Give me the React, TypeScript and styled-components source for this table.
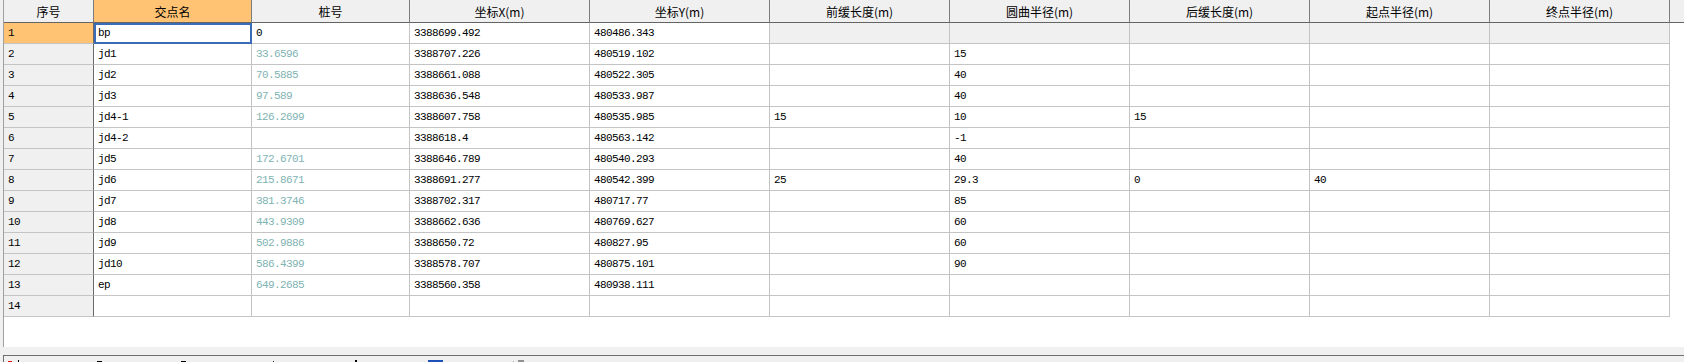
import styled, { createGlobalStyle } from "styled-components"

const GlobalStyle = createGlobalStyle`
  html, body {
    margin: 0;
    padding: 0;
    background: #f0f0f0;
    overflow: hidden;
  }
`

const Page = styled.div`
  width: 1684px;
  height: 362px;
  display: flex;
  flex-direction: column;
  overflow: hidden;
`

const GridPanel = styled.div`
  margin-left: 3px;
  height: 347px;
  flex: none;
  box-sizing: border-box;
  background: #ffffff;
  border-left: 1px solid #a0a0a0;
  display: flex;
  flex-direction: column;
`

const HeaderRow = styled.div`
  display: flex;
  height: 23px;
  flex: none;
`

const HeaderCell = styled.div<{ $w: number; $active?: boolean }>`
  width: ${(p) => p.$w}px;
  flex: none;
  box-sizing: border-box;
  border-right: 1px solid #7c7c7c;
  border-bottom: 1px solid #646464;
  background: ${(p) => (p.$active ? "#ffc373" : "#f0f0f0")};
  display: flex;
  align-items: center;
  justify-content: center;
  font-family: "Noto Sans CJK SC", "Noto Sans", sans-serif;
  font-size: 12px;
  color: #000;
`

const HeaderFiller = styled.div`
  flex: 1;
  border-bottom: 1px solid #646464;
  background: #f0f0f0;
`

const Row = styled.div`
  display: flex;
  height: 21px;
  flex: none;
`

const RowHead = styled.div<{ $active?: boolean }>`
  width: 90px;
  flex: none;
  box-sizing: border-box;
  padding-left: 4px;
  border-right: 1px solid #6a6a6a;
  border-bottom: 1px solid #c4c4c4;
  background: ${(p) => (p.$active ? "#ffc373" : "#f0f0f0")};
  display: flex;
  align-items: center;
  font-family: "Liberation Mono", monospace;
  font-size: 11px;
  letter-spacing: -0.6px;
  color: #000;
`

const Cell = styled.div<{ $w: number; $teal?: boolean; $off?: boolean; $sel?: boolean }>`
  width: ${(p) => p.$w}px;
  flex: none;
  box-sizing: border-box;
  padding-left: 4px;
  border-right: 1px solid #c4c4c4;
  border-bottom: 1px solid #c4c4c4;
  background: ${(p) => (p.$off ? "#f0f0f0" : "#ffffff")};
  color: ${(p) => (p.$teal ? "#80b3b3" : "#000000")};
  display: flex;
  align-items: center;
  white-space: pre;
  font-family: "Liberation Mono", monospace;
  font-size: 11px;
  letter-spacing: -0.6px;
  outline: ${(p) => (p.$sel ? "2px solid #3a6bb6" : "none")};
  outline-offset: -2px;
`

const Toolbar = styled.div`
  margin-top: 8px;
  margin-left: 3px;
  flex: 1;
  box-sizing: border-box;
  border-top: 1px solid #6e6e6e;
  border-left: 1px solid #6e6e6e;
  background: #f0f0f0;
  display: flex;
  padding: 4px 0 0 4px;
`

const ToolButton = styled.div<{ $w: number }>`
  width: ${(p) => p.$w}px;
  flex: none;
  height: 16px;
`

const widths = [158, 158, 180, 180, 180, 180, 180, 180, 180]
const headers = ["交点名", "桩号", "坐标X(m)", "坐标Y(m)", "前缓长度(m)", "圆曲半径(m)", "后缓长度(m)", "起点半径(m)", "终点半径(m)"]

const rows: string[][] = [
  ["bp", "0", "3388699.492", "480486.343", "", "", "", "", ""],
  ["jd1", "33.6596", "3388707.226", "480519.102", "", "15", "", "", ""],
  ["jd2", "70.5885", "3388661.088", "480522.305", "", "40", "", "", ""],
  ["jd3", "97.589", "3388636.548", "480533.987", "", "40", "", "", ""],
  ["jd4-1", "126.2699", "3388607.758", "480535.985", "15", "10", "15", "", ""],
  ["jd4-2", "", "3388618.4", "480563.142", "", "-1", "", "", ""],
  ["jd5", "172.6701", "3388646.789", "480540.293", "", "40", "", "", ""],
  ["jd6", "215.8671", "3388691.277", "480542.399", "25", "29.3", "0", "40", ""],
  ["jd7", "381.3746", "3388702.317", "480717.77", "", "85", "", "", ""],
  ["jd8", "443.9309", "3388662.636", "480769.627", "", "60", "", "", ""],
  ["jd9", "502.9886", "3388650.72", "480827.95", "", "60", "", "", ""],
  ["jd10", "586.4399", "3388578.707", "480875.101", "", "90", "", "", ""],
  ["ep", "649.2685", "3388560.358", "480938.111", "", "", "", "", ""],
  ["", "", "", "", "", "", "", "", ""],
]

export default function App() {
  return (
    <Page>
      <GlobalStyle />
      <GridPanel>
        <HeaderRow>
          <HeaderCell $w={90}>序号</HeaderCell>
          {headers.map((h, i) => (
            <HeaderCell key={h} $w={widths[i]} $active={i === 0}>
              {h}
            </HeaderCell>
          ))}
          <HeaderFiller />
        </HeaderRow>
        {rows.map((r, ri) => (
          <Row key={ri}>
            <RowHead $active={ri === 0}>{ri + 1}</RowHead>
            {r.map((v, ci) => (
              <Cell
                key={ci}
                $w={widths[ci]}
                $teal={ci === 1 && ri > 0}
                $off={ri === 0 && ci >= 4}
                $sel={ri === 0 && ci === 0}
              >
                {v}
              </Cell>
            ))}
          </Row>
        ))}
      </GridPanel>
      <Toolbar>
        <ToolButton $w={89}>
          <svg width="16" height="16">
            <rect x="0" y="1" width="4" height="15" fill="#e01010" />
            <rect x="10" y="0" width="1" height="16" fill="#000" />
          </svg>
        </ToolButton>
        <ToolButton $w={84}>
          <svg width="16" height="16">
            <rect x="0" y="1" width="5" height="2" fill="#000" />
          </svg>
        </ToolButton>
        <ToolButton $w={92}>
          <svg width="16" height="16">
            <rect x="0" y="1" width="5" height="2" fill="#000" />
          </svg>
        </ToolButton>
        <ToolButton $w={82}>
          <svg width="16" height="16">
            <rect x="0" y="1" width="1" height="2" fill="#333" />
          </svg>
        </ToolButton>
        <ToolButton $w={73}>
          <svg width="16" height="16">
            <rect x="0" y="0" width="2" height="2" fill="#000" />
          </svg>
        </ToolButton>
        <ToolButton $w={85}>
          <svg width="16" height="16">
            <rect x="0" y="0" width="15" height="16" fill="#1c4fb8" />
            <rect x="2" y="2" width="11" height="12" fill="#3f7de0" />
            <rect x="7" y="2" width="1" height="12" fill="#ffffff" />
          </svg>
        </ToolButton>
        <ToolButton $w={60}>
          <svg width="16" height="16">
            <rect x="0" y="1" width="1" height="15" fill="#b0b0b0" />
            <rect x="5" y="0" width="6" height="2" fill="#909090" />
          </svg>
        </ToolButton>
      </Toolbar>
    </Page>
  )
}
